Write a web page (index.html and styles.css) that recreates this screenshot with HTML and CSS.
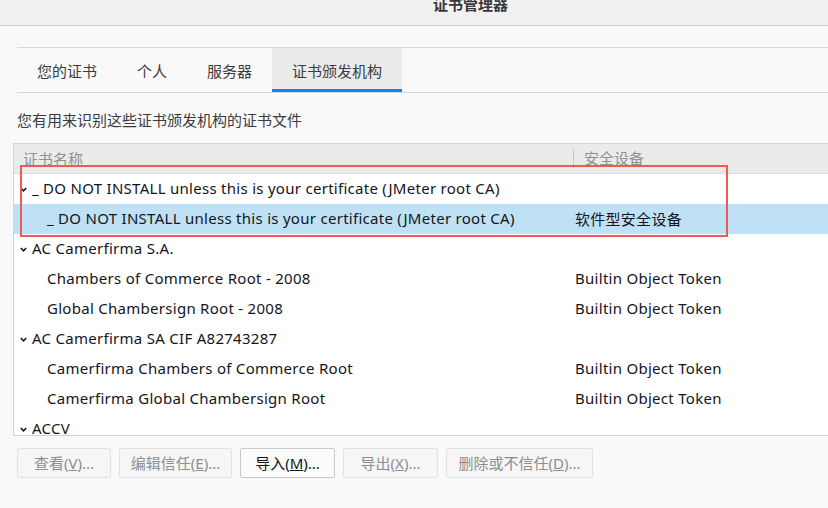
FILE: index.html
```html
<!DOCTYPE html>
<html lang="zh-CN">
<head>
<meta charset="utf-8">
<title>证书管理器</title>
<link rel="stylesheet" href="styles.css">
</head>
<body>
<div class="titlebar"><span class="title">证书管理器</span></div>
<div class="main">
  <div class="tabs">
    <div class="tab">您的证书</div>
    <div class="tab">个人</div>
    <div class="tab">服务器</div>
    <div class="tab active">证书颁发机构</div>
  </div>
  <div class="desc">您有用来识别这些证书颁发机构的证书文件</div>
  <div class="tree">
    <div class="thead">
      <div class="hcell c1">证书名称</div>
      <div class="hcell c2">安全设备</div>
    </div>
    <div class="row parent">
      <div class="cell c1"><svg class="chev" width="7" height="5" viewBox="0 0 7 5"><polyline points="0.8,1 3.5,3.8 6.2,1"/></svg>_ DO NOT INSTALL unless this is your certificate (JMeter root CA)</div>
      <div class="cell c2"></div>
    </div>
    <div class="row child selected">
      <div class="cell c1">_ DO NOT INSTALL unless this is your certificate (JMeter root CA)</div>
      <div class="cell c2">软件型安全设备</div>
    </div>
    <div class="row parent">
      <div class="cell c1"><svg class="chev" width="7" height="5" viewBox="0 0 7 5"><polyline points="0.8,1 3.5,3.8 6.2,1"/></svg>AC Camerfirma S.A.</div>
      <div class="cell c2"></div>
    </div>
    <div class="row child">
      <div class="cell c1">Chambers of Commerce Root - 2008</div>
      <div class="cell c2">Builtin Object Token</div>
    </div>
    <div class="row child">
      <div class="cell c1">Global Chambersign Root - 2008</div>
      <div class="cell c2">Builtin Object Token</div>
    </div>
    <div class="row parent">
      <div class="cell c1"><svg class="chev" width="7" height="5" viewBox="0 0 7 5"><polyline points="0.8,1 3.5,3.8 6.2,1"/></svg>AC Camerfirma SA CIF A82743287</div>
      <div class="cell c2"></div>
    </div>
    <div class="row child">
      <div class="cell c1">Camerfirma Chambers of Commerce Root</div>
      <div class="cell c2">Builtin Object Token</div>
    </div>
    <div class="row child">
      <div class="cell c1">Camerfirma Global Chambersign Root</div>
      <div class="cell c2">Builtin Object Token</div>
    </div>
    <div class="row parent">
      <div class="cell c1"><svg class="chev" width="7" height="5" viewBox="0 0 7 5"><polyline points="0.8,1 3.5,3.8 6.2,1"/></svg>ACCV</div>
      <div class="cell c2"></div>
    </div>
  </div>
  <div class="buttons">
    <button class="btn w1" disabled>查看(<u>V</u>)...</button>
    <button class="btn w2" disabled>编辑信任(<u>E</u>)...</button>
    <button class="btn w3 enabled">导入(<u>M</u>)...</button>
    <button class="btn w3" disabled>导出(<u>X</u>)...</button>
    <button class="btn w5" disabled>删除或不信任(<u>D</u>)...</button>
  </div>
</div>
<div class="highlight"></div>
</body>
</html>
```

FILE: styles.css
```css
html, body {
  margin: 0;
  padding: 0;
}
body {
  width: 828px;
  height: 508px;
  overflow: hidden;
  background: #f9f9fa;
  font-family: "Noto Sans", "Noto Sans CJK SC", sans-serif;
  font-size: 15px;
  color: #15141a;
  position: relative;
}
.titlebar {
  height: 25px;
  border-bottom: 1px solid #c8c8c8;
  background: #f1f1f1;
  text-align: center;
  padding-left: 113px;
  overflow: hidden;
}
.title {
  display: block;
  font-weight: bold;
  color: #38383d;
  line-height: 15px;
  margin-top: -3px;
}
.main {
  padding: 21px 0 0 13px;
}
.tabs {
  display: flex;
  margin-left: 4px;
  height: 44px;
  border-top: 1px solid #d7d7db;
  border-bottom: 1px solid #d7d7db;
}
.tab {
  display: flex;
  align-items: center;
  padding: 0 20px;
  color: #3b3b40;
}
.tab.active {
  background: #ebebeb;
  box-shadow: inset 0 -3px 0 #0a84ff;
}
.desc {
  margin: 17px 0 13px 4px;
  line-height: 20px;
  color: #3b3b40;
}
.tree {
  height: 291px;
  border: 1px solid #d3d3d6;
  border-right: none;
  background: #ffffff;
  overflow: hidden;
}
.thead {
  display: flex;
  align-items: center;
  height: 29px;
  background: #ebebeb;
  border-bottom: 1px solid #dcdcdc;
  color: #8f8f94;
}
.hcell.c1 {
  width: 559px;
  padding-left: 9px;
  box-sizing: border-box;
}
.hcell.c2 {
  border-left: 1px solid #c8c8c8;
  padding-left: 10px;
  line-height: 19px;
}
.row {
  display: flex;
  align-items: center;
  height: 30px;
  box-sizing: border-box;
  padding-bottom: 2px;
  white-space: nowrap;
  letter-spacing: 0.28px;
}
.row.selected {
  background: #bfe1f5;
}
.cell.c1 {
  width: 559px;
  box-sizing: border-box;
  display: flex;
  align-items: center;
}
.cell.c2 {
  padding-left: 2px;
}
.row.parent .c1 {
  padding-left: 6px;
}
.row.child .c1 {
  padding-left: 33px;
}
.chev {
  margin: 3px 5px 0 0;
  flex: none;
}
.chev polyline {
  fill: none;
  stroke: #15141a;
  stroke-width: 1.5;
}
.buttons {
  display: flex;
  gap: 8px;
  margin: 12px 0 0 4px;
}
.btn {
  height: 30px;
  box-sizing: border-box;
  padding: 0 0 1px;
  border: 1px solid #e2e2e4;
  border-radius: 2px;
  background: #f6f6f7;
  color: #8d8d92;
  font-family: "Noto Sans", "Noto Sans CJK SC", sans-serif;
  font-size: 15px;
  text-align: center;
}
.btn.enabled {
  border-color: #c9c9cc;
  background: #fbfbfb;
  color: #15141a;
}
.w1 { width: 94px; }
.w2 { width: 113px; }
.w3 { width: 95px; }
.w5 { width: 147px; }
.highlight {
  position: absolute;
  left: 20px;
  top: 165px;
  width: 708px;
  height: 72px;
  box-sizing: border-box;
  border: 2px solid #ef5b50;
}
```
